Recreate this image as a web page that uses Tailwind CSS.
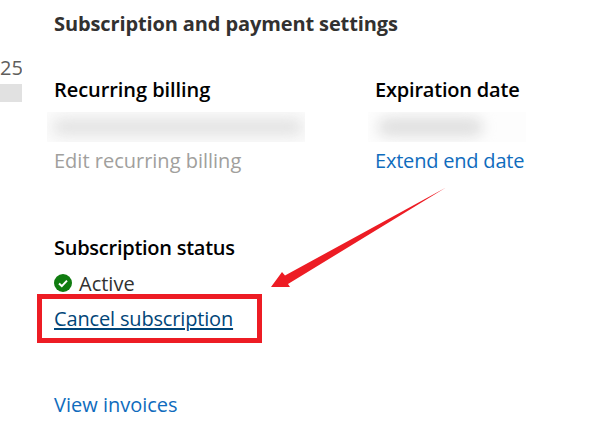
<!DOCTYPE html>
<html lang="en">
  <head>
    <meta charset="UTF-8" />
    <title>Subscription and payment settings</title>
    <script src="https://cdn.jsdelivr.net/npm/@tailwindcss/browser@4"></script>
  </head>
  <body class="relative h-[421px] w-[610px] overflow-hidden bg-white font-['Open_Sans',sans-serif] text-[20px] leading-[26px]">
    <!-- bit of the left column that is cut off -->
    <div class="absolute left-0 top-[55px] w-[22px] overflow-hidden text-right text-[#605e5c]">25</div>
    <div class="absolute left-0 top-[84px] h-[18px] w-[22px] bg-[#e1e1e1]"></div>

    <main class="pl-[54px] pt-[11px]">
      <h2 class="font-bold tracking-[-0.12px] text-[#323130]">Subscription and payment settings</h2>

      <div class="mt-[40px] flex">
        <section class="w-[321px]">
          <h3 class="font-semibold tracking-[-0.06px] text-black">Recurring billing</h3>
          <div class="relative -ml-[7px] mt-[9px] h-[30px] w-[258px] overflow-hidden bg-[#fbfbfb]">
            <div class="absolute left-[6px] top-[7px] h-[16px] w-[250px] rounded-full bg-[#e2e2e2] blur-[7px]"></div>
          </div>
          <a class="mt-[6px] block text-[#a19f9d]">Edit recurring billing</a>
        </section>
        <section>
          <h3 class="font-semibold tracking-[-0.2px] text-black">Expiration date</h3>
          <div class="relative -ml-[7px] mt-[9px] h-[30px] w-[158px] overflow-hidden bg-[#fdfdfd]">
            <div class="absolute left-[10px] top-[6px] h-[18px] w-[105px] rounded-full bg-[#dedede] blur-[7px]"></div>
          </div>
          <a class="mt-[6px] block tracking-[-0.2px] text-[#0f6cbd]">Extend end date</a>
        </section>
      </div>

      <section class="mt-[61px]">
        <h3 class="font-semibold tracking-[-0.26px] text-black">Subscription status</h3>
        <div class="mt-[10px] flex items-center gap-[7px] text-[#323130]">
          <svg class="-mt-[3px] h-[18px] w-[18px]" viewBox="0 0 18 18">
            <circle cx="9" cy="9" r="9" fill="#107c10" />
            <path d="M5 9.5l2.8 2.6L13 6.6" fill="none" stroke="#fff" stroke-width="2" />
          </svg>
          <span>Active</span>
        </div>
        <a class="mt-[9px] block tracking-[-0.16px] text-[#004578] underline underline-offset-2">Cancel subscription</a>
        <a class="mt-[60px] block text-[#0f6cbd]">View invoices</a>
      </section>
    </main>

    <!-- red annotation on top of the screenshot -->
    <div class="absolute left-[37px] top-[294px] h-[49px] w-[225px] border-[5px] border-[#ed1c24]"></div>
    <svg class="absolute left-0 top-0 h-[421px] w-[610px]" viewBox="0 0 610 421">
      <path d="M446 187.5L285 275.5L282 272L271 287L290 287L288 284Z" fill="#ed1c24" />
    </svg>
  </body>
</html>
